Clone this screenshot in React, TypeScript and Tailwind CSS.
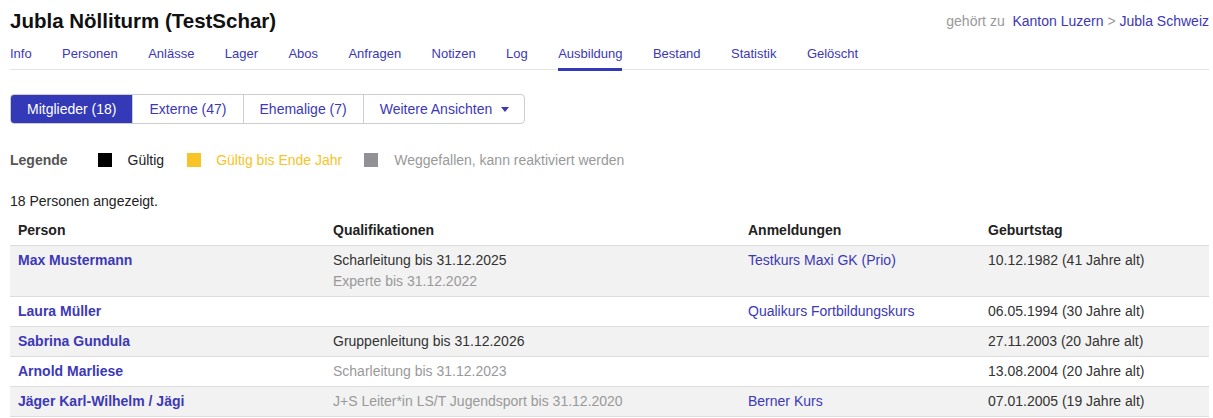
import React from "react";

const LINK = "text-[#3c38b6]";

const tabs = [
  "Info",
  "Personen",
  "Anlässe",
  "Lager",
  "Abos",
  "Anfragen",
  "Notizen",
  "Log",
  "Ausbildung",
  "Bestand",
  "Statistik",
  "Gelöscht",
];

type Qual = { text: string; expired?: boolean };

type Row = {
  name: string;
  quals: Qual[];
  course?: string;
  birthday: string;
};

const rows: Row[] = [
  {
    name: "Max Mustermann",
    quals: [
      { text: "Scharleitung bis 31.12.2025" },
      { text: "Experte bis 31.12.2022", expired: true },
    ],
    course: "Testkurs Maxi GK (Prio)",
    birthday: "10.12.1982 (41 Jahre alt)",
  },
  {
    name: "Laura Müller",
    quals: [],
    course: "Qualikurs Fortbildungskurs",
    birthday: "06.05.1994 (30 Jahre alt)",
  },
  {
    name: "Sabrina Gundula",
    quals: [{ text: "Gruppenleitung bis 31.12.2026" }],
    birthday: "27.11.2003 (20 Jahre alt)",
  },
  {
    name: "Arnold Marliese",
    quals: [{ text: "Scharleitung bis 31.12.2023", expired: true }],
    birthday: "13.08.2004 (20 Jahre alt)",
  },
  {
    name: "Jäger Karl-Wilhelm / Jägi",
    quals: [
      { text: "J+S Leiter*in LS/T Jugendsport bis 31.12.2020", expired: true },
    ],
    course: "Berner Kurs",
    birthday: "07.01.2005 (19 Jahre alt)",
  },
];

export default function App() {
  return (
    <div className="min-h-[418px] bg-white pl-[10px] pr-[4px] pt-[9px] font-['Liberation_Sans',Arial,sans-serif] text-[14px] text-[#333]">
      {/* Header */}
      <div className="flex items-center justify-between h-[24px]">
        <h1 className="text-[20.5px] leading-[24px] font-bold text-[#111]">
          Jubla Nölliturm (TestSchar)
        </h1>
        <div className="text-[14px] leading-[20px] text-[#999]">
          gehört zu&nbsp;&nbsp;<a className={LINK}>Kanton Luzern</a>
          &nbsp;&gt;&nbsp;<a className={LINK}>Jubla Schweiz</a>
        </div>
      </div>

      {/* Tabs */}
      <nav className="mt-[13px] flex gap-[30.4px] border-b border-[#e4e4e4] text-[13px] leading-[15px]">
        {tabs.map((t) => (
          <a
            key={t}
            className={`block pb-[7px] -mb-[2px] border-b-[3px] ${LINK} ${
              t === "Ausbildung" ? "border-[#3439b7]" : "border-transparent"
            }`}
          >
            {t}
          </a>
        ))}
      </nav>

      {/* Button group */}
      <div className="mt-[24px] inline-flex h-[30px] rounded-[4px] border border-[#ccc] overflow-hidden leading-[28px]">
        <span className="px-4 bg-[#3439b7] text-white">Mitglieder (18)</span>
        <span className={`px-4 border-l border-[#ccc] ${LINK}`}>Externe (47)</span>
        <span className={`px-4 border-l border-[#ccc] ${LINK}`}>Ehemalige (7)</span>
        <span className={`pl-4 pr-[15px] border-l border-[#ccc] flex items-center gap-[9px] ${LINK}`}>
          Weitere Ansichten
          <svg width="8" height="5" viewBox="0 0 8 5" className="fill-current">
            <path d="M0 0h8L4 5z" />
          </svg>
        </span>
      </div>

      {/* Legend */}
      <div className="mt-[26px] flex items-center leading-[20px]">
        <span className="font-bold text-[#555] mr-[30px]">Legende</span>
        <span className="w-[14px] h-[14px] bg-black" />
        <span className="ml-[16px] mr-[23px] text-[#222]">Gültig</span>
        <span className="w-[14px] h-[14px] bg-[#f7c325]" />
        <span className="ml-[15px] mr-[22px] text-[#f7c325]">Gültig bis Ende Jahr</span>
        <span className="w-[14px] h-[14px] bg-[#929296]" />
        <span className="ml-[16px] text-[#999]">Weggefallen, kann reaktiviert werden</span>
      </div>

      <p className="mt-[21px] leading-[20px] text-[#222]">18 Personen angezeigt.</p>

      {/* Table */}
      <table className="mt-[5px] w-full table-fixed border-collapse leading-[21px]">
        <colgroup>
          <col className="w-[315px]" />
          <col className="w-[415px]" />
          <col className="w-[240px]" />
          <col />
        </colgroup>
        <thead>
          <tr className="border-b border-[#ddd] text-left text-[#222]">
            <th className="px-2 py-1 font-bold">Person</th>
            <th className="px-2 py-1 font-bold">Qualifikationen</th>
            <th className="px-2 py-1 font-bold">Anmeldungen</th>
            <th className="px-2 py-1 font-bold">Geburtstag</th>
          </tr>
        </thead>
        <tbody>
          {rows.map((r, i) => (
            <tr
              key={r.name}
              className={`border-b border-[#ddd] align-top ${
                i % 2 === 0 ? "bg-[#f2f2f2]" : "bg-white"
              }`}
            >
              <td className={`px-2 py-1 font-bold ${LINK}`}>{r.name}</td>
              <td className="px-2 py-1">
                {r.quals.map((q) => (
                  <div key={q.text} className={q.expired ? "text-[#999]" : "text-[#333]"}>
                    {q.text}
                  </div>
                ))}
              </td>
              <td className={`px-2 py-1 ${LINK}`}>{r.course}</td>
              <td className="px-2 py-1 text-[#333]">{r.birthday}</td>
            </tr>
          ))}
        </tbody>
      </table>
    </div>
  );
}
